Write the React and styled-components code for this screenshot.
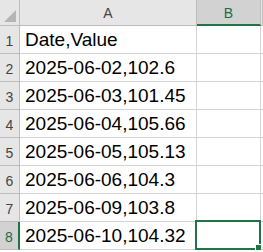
import React from "react";
import styled, { createGlobalStyle } from "styled-components";

const GlobalStyle = createGlobalStyle`
    html, body {
        margin: 0;
        padding: 0;
        background: #ffffff;
        overflow: hidden;
    }
`;

const Sheet = styled.div`
    display: grid;
    grid-template-columns: 20px 177px 64px 2px;
    grid-template-rows: 26px repeat(8, 28px);
    font-family: "Liberation Sans", Arial, sans-serif;
    width: 263px;
    overflow: hidden;
`;

const Corner = styled.div`
    position: relative;
    background: #e6e6e6;
    border-right: 1px solid #bdbdbd;
    border-bottom: 1px solid #bdbdbd;
    box-sizing: border-box;
`;

const Triangle = styled.div`
    position: absolute;
    right: 3px;
    bottom: 3px;
    width: 0;
    height: 0;
    border-left: 12px solid transparent;
    border-bottom: 12px solid #b5b5b5;
`;

const ColHead = styled.div`
    display: flex;
    align-items: center;
    justify-content: center;
    box-sizing: border-box;
    background: ${(p) => (p.active ? "#d2d2d2" : "#e6e6e6")};
    border-right: 1px solid #bdbdbd;
    border-bottom: ${(p) => (p.active ? "2px solid #217346" : "1px solid #bdbdbd")};
    color: ${(p) => (p.active ? "#1e6b41" : "#444444")};
    font-size: 14px;
    padding-top: ${(p) => (p.active ? "1px" : "0")};
`;

const RowHead = styled.div`
    display: flex;
    align-items: flex-end;
    justify-content: center;
    padding-bottom: 4px;
    box-sizing: border-box;
    background: ${(p) => (p.active ? "#d2d2d2" : "#e6e6e6")};
    border-right: ${(p) => (p.active ? "2px solid #217346" : "1px solid #bdbdbd")};
    border-bottom: 1px solid #bdbdbd;
    color: ${(p) => (p.active ? "#1e6b41" : "#444444")};
    font-size: 14px;
`;

const Cell = styled.div`
    position: relative;
    display: flex;
    align-items: flex-end;
    box-sizing: border-box;
    padding: 0 0 2px 5px;
    border-right: 1px solid #d4d4d4;
    border-bottom: 1px solid #d4d4d4;
    color: #000000;
    font-size: 19px;
    white-space: nowrap;
`;

const Selection = styled.div`
    position: absolute;
    left: -2px;
    top: -2px;
    right: -1px;
    bottom: -1px;
    border: 2px solid #217346;
    pointer-events: none;
`;

const Handle = styled.div`
    position: absolute;
    right: -3px;
    bottom: -3px;
    width: 5px;
    height: 5px;
    background: #217346;
    border: 1px solid #ffffff;
`;

const rows = [
    "Date,Value",
    "2025-06-02,102.6",
    "2025-06-03,101.45",
    "2025-06-04,105.66",
    "2025-06-05,105.13",
    "2025-06-06,104.3",
    "2025-06-09,103.8",
    "2025-06-10,104.32",
];

const App = () => {
    return (
        <>
            <GlobalStyle />
            <Sheet>
                <Corner>
                    <Triangle />
                </Corner>
                <ColHead>A</ColHead>
                <ColHead active>B</ColHead>
                <ColHead />
                {rows.map((text, i) => {
                    const last = i === rows.length - 1;
                    return (
                        <React.Fragment key={i}>
                            <RowHead active={last}>{i + 1}</RowHead>
                            <Cell>{text}</Cell>
                            <Cell>
                                {last && (
                                    <Selection>
                                        <Handle />
                                    </Selection>
                                )}
                            </Cell>
                            <Cell />
                        </React.Fragment>
                    );
                })}
            </Sheet>
        </>
    );
};

export default App;
